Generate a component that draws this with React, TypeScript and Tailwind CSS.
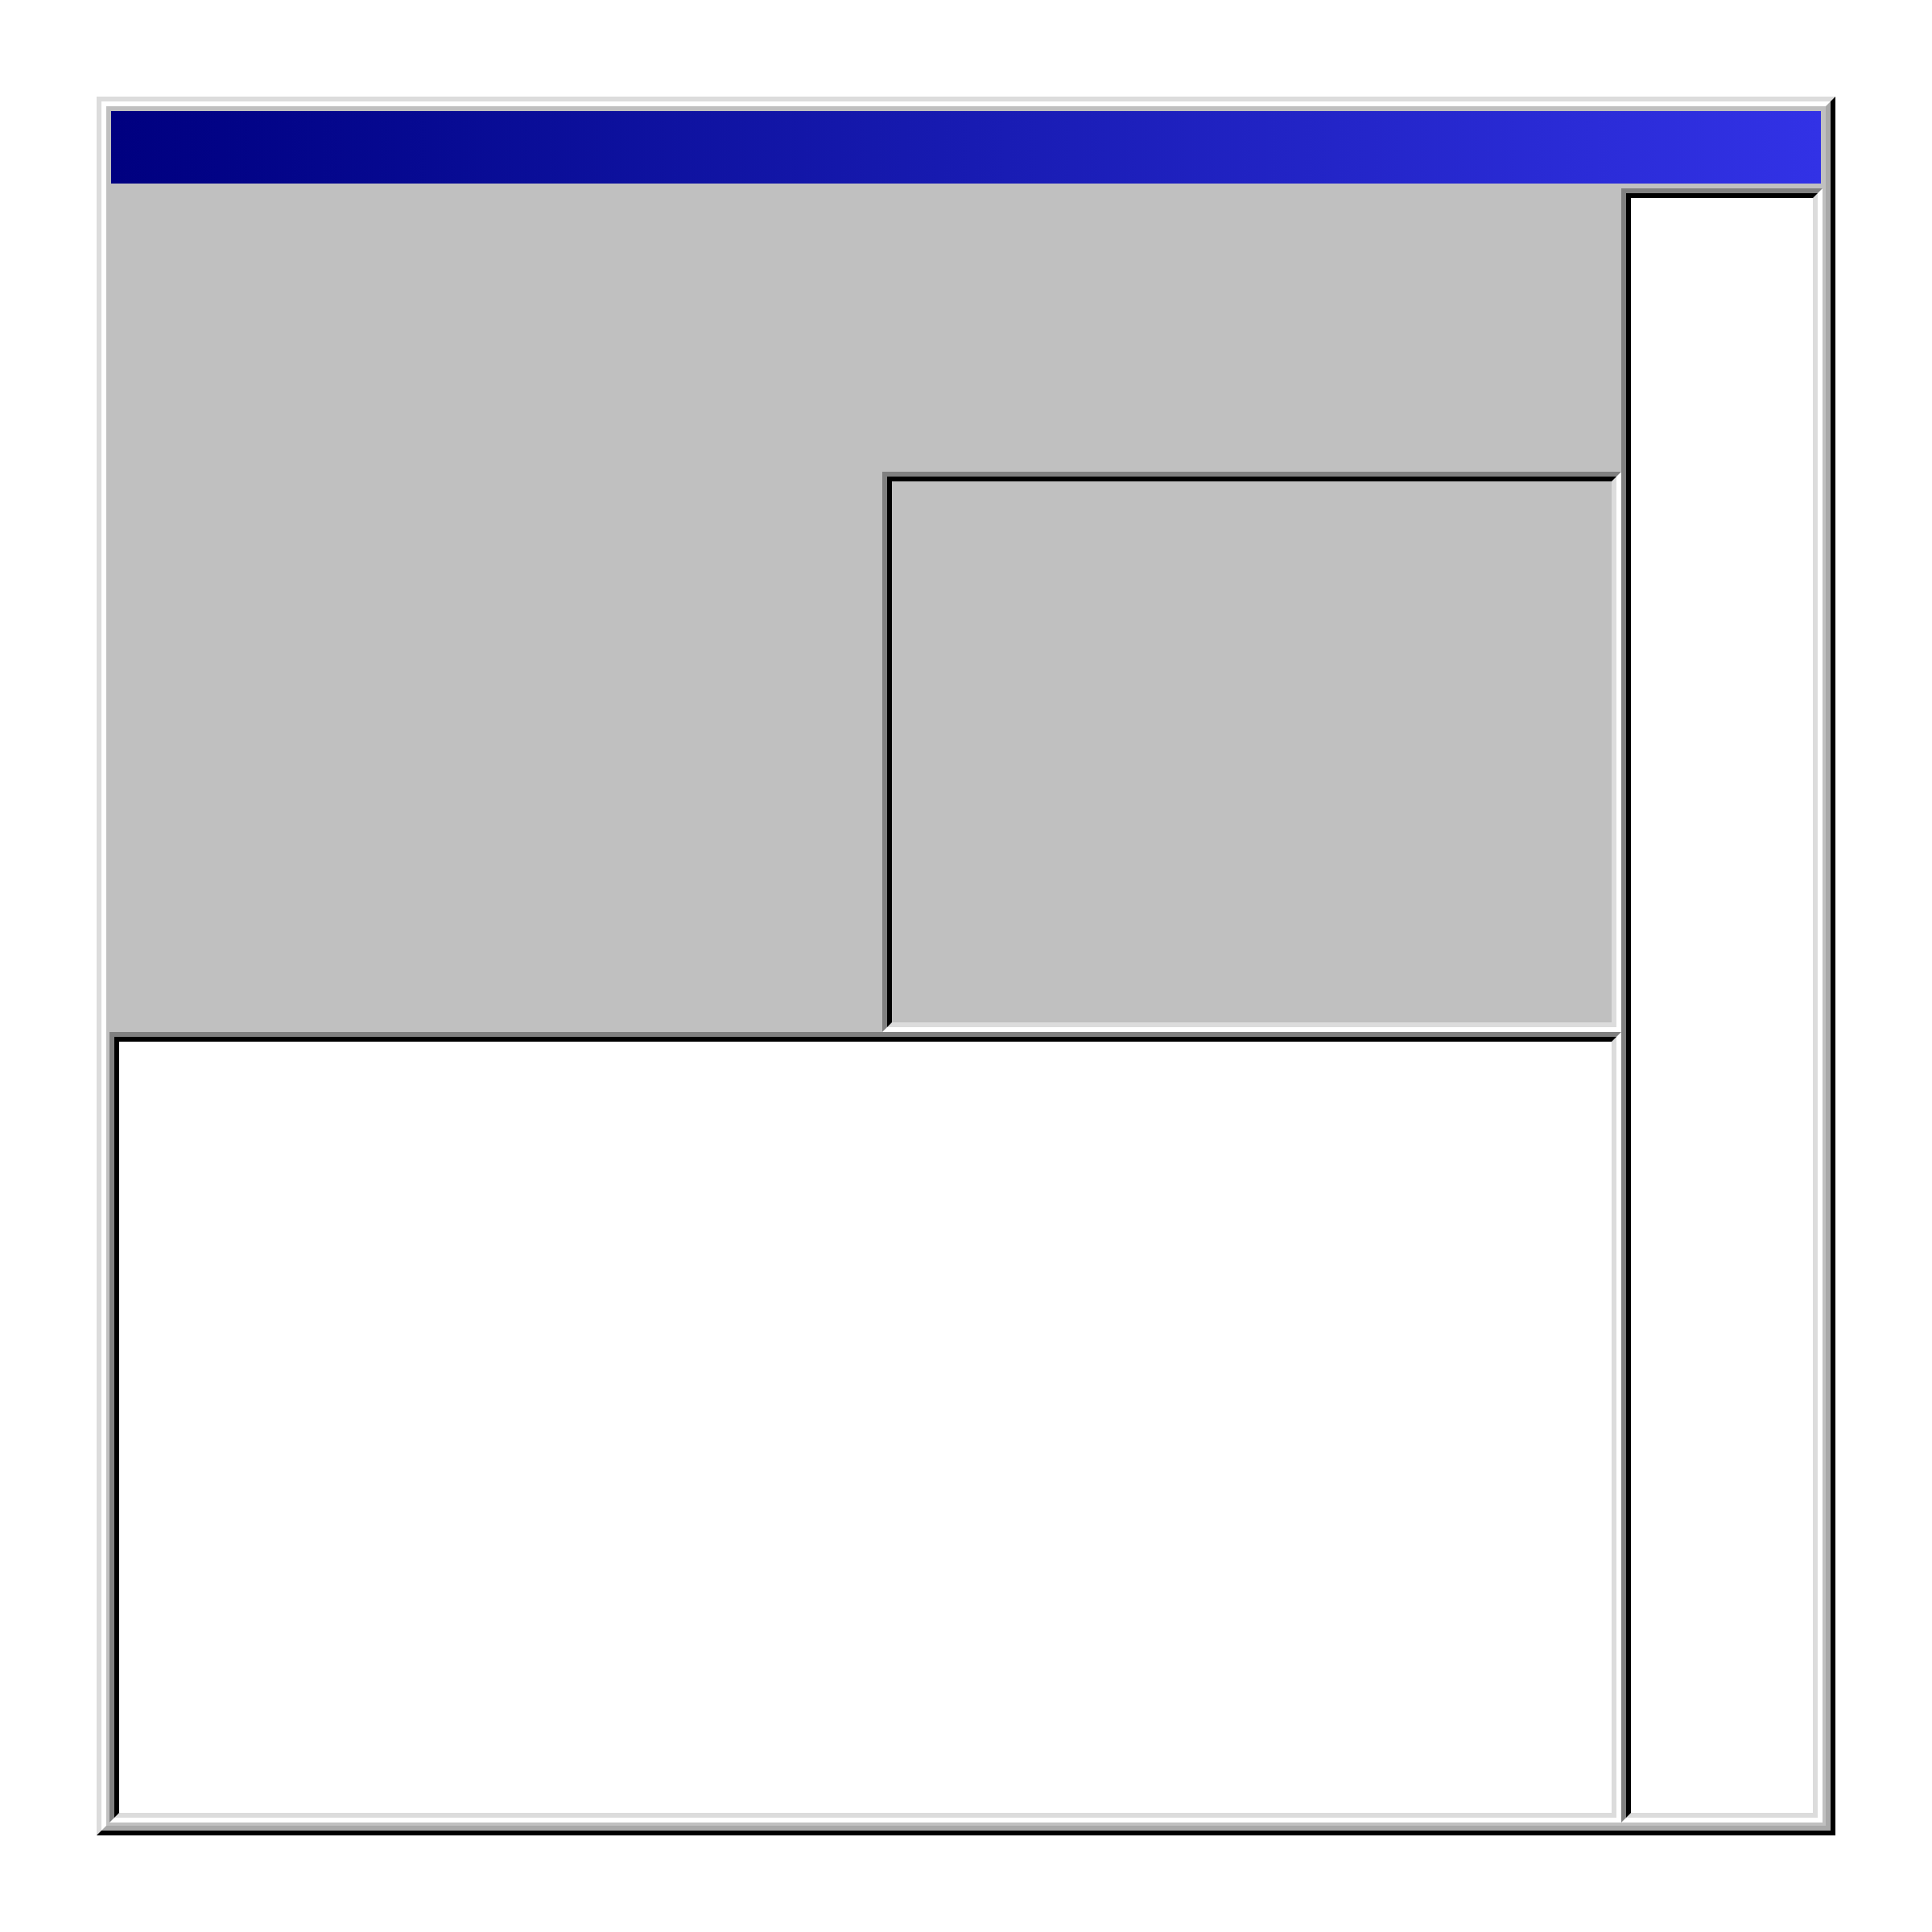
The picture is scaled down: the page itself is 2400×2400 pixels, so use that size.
type PanelProps = {
    className?: string;
    fill: string;
};

// sunken two-layer bevel: dark on top/left, light on bottom/right
function Sunken({ className = "", fill }: PanelProps) {
    return (
        <div
            className={`border-[6px] border-t-[#808080] border-l-[#808080] border-r-white border-b-white ${className}`}
        >
            <div
                className={`h-full w-full border-[6px] border-t-black border-l-black border-r-[#dcdcdc] border-b-[#dcdcdc] ${fill}`}
            />
        </div>
    );
}

export default function App() {
    return (
        <div className="min-h-screen bg-white p-[120px]">
            <div className="h-[2160px] w-[2160px] border-[6px] border-t-[#dcdcdc] border-l-[#dcdcdc] border-r-black border-b-black">
                <div className="flex h-full w-full flex-col border-[6px] border-t-white border-l-white border-r-[#a9a9a9] border-b-[#a9a9a9] bg-[#c0c0c0]">
                    <div className="mx-[6px] mt-[6px] h-[90px] shrink-0 bg-gradient-to-r from-[#000080] to-[#3232e6]" />

                    <div className="mx-[4px] mb-[4px] mt-[6px] flex min-h-0 flex-1">
                        <div className="flex min-w-0 flex-1 flex-col">
                            <div className="flex h-[1048px] shrink-0 items-end justify-end">
                                <Sunken className="h-[696px] w-[918px]" fill="bg-[#c0c0c0]" />
                            </div>
                            <Sunken className="min-h-0 flex-1" fill="bg-white" />
                        </div>
                        <Sunken className="w-[250px] shrink-0" fill="bg-white" />
                    </div>
                </div>
            </div>
        </div>
    );
}
